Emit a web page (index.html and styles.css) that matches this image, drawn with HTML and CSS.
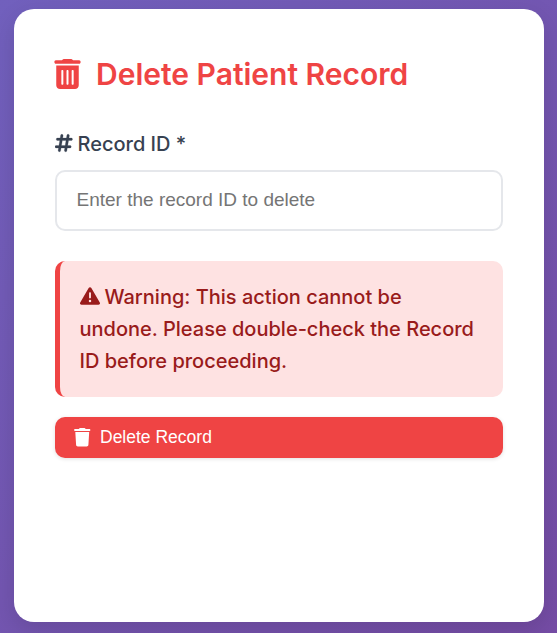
FILE: index.html
```html
<!DOCTYPE html>
<html lang="en"><head><meta charset="utf-8"><title>Delete Patient Record</title><link rel="stylesheet" href="styles.css"></head>
<body>
<main class="card">
<h1 class="title"><svg class="icon-title" viewBox="0 0 448 512"><path fill-rule="evenodd" d="M135.2 17.7C140.6 6.8 151.700 0 163.800 0H284.200c12.100 0 23.200 6.800 28.600 17.700L320 20h104c13 0 24 13 24 31s-11 31-24 31H24C11 82 0 69 0 51S11 20 24 20h104zM32 112H416V448c0 35.300-28.700 64-64 64H96c-35.300 0-64-28.700-64-64V112zm104 76c-10 0-17 7-17 17V422c0 10 7 17 17 17s17-7 17-17V205c0-10-7-17-17-17zm88 0c-10 0-17 7-17 17V422c0 10 7 17 17 17s17-7 17-17V205c0-10-7-17-17-17zm88 0c-10 0-17 7-17 17V422c0 10 7 17 17 17s17-7 17-17V205c0-10-7-17-17-17z"/></svg>Delete Patient Record</h1>
<form>
<label class="label" for="record"><svg class="icon-hash" viewBox="0 0 448 512"><path d="M181.300 32.400c17.400 2.900 29.200 19.400 26.300 36.800L197.800 128h95.100l11.500-69.300c2.900-17.400 19.400-29.200 36.800-26.300s29.200 19.400 26.300 36.800L357.800 128H416c17.700 0 32 14.300 32 32s-14.300 32-32 32H347.100L325.800 320H384c17.700 0 32 14.300 32 32s-14.300 32-32 32H315.100l-11.500 69.300c-2.900 17.400-19.400 29.200-36.800 26.300s-29.200-19.400-26.300-36.800l9.800-58.700H155.100l-11.500 69.300c-2.900 17.400-19.400 29.200-36.800 26.300s-29.200-19.400-26.300-36.800L90.200 384H32c-17.700 0-32-14.300-32-32s14.300-32 32-32h68.900l21.300-128H64c-17.700 0-32-14.300-32-32s14.300-32 32-32h68.900l11.500-69.300c2.900-17.400 19.400-29.200 36.800-26.300zM187.100 192L165.800 320h95.100l21.300-128H187.100z"/></svg>Record ID *</label>
<input class="input" id="record" placeholder="Enter the record ID to delete">
<p class="warning"><svg class="icon-warn" viewBox="0 0 512 512"><path d="M256 32c14.200 0 27.300 7.500 34.500 19.800l216 368c7.300 12.400 7.300 27.700 .2 40.100S486.300 480 472 480H40c-14.300 0-27.600-7.700-34.700-20.100s-7-27.800 .2-40.100l216-368C228.700 39.500 241.800 32 256 32zm0 128c-13.300 0-24 10.700-24 24V296c0 13.300 10.700 24 24 24s24-10.700 24-24V184c0-13.300-10.700-24-24-24zm32 224a32 32 0 1 0 -64 0 32 32 0 1 0 64 0z"/></svg>Warning: This action cannot be undone. Please double-check the Record ID before proceeding.</p>
<button class="button" type="button"><svg class="icon-button" viewBox="0 0 448 512"><path d="M135.200 17.700L128 28H24C10 28 0 40 0 56S10 84 24 84H424c14 0 24-12 24-28s-10-28-24-28H320l-7.200-10.300C307.400 6.800 296.300 0 284.200 0H163.800c-12.100 0-23.200 6.800-28.600 17.700zM416 108H32L53.200 467c1.600 25.300 22.600 45 47.900 45H346.900c25.300 0 46.300-19.700 47.900-45L416 108z"/></svg>Delete Record</button>
</form>
</main>
</body></html>
```
FILE: styles.css
```css
* { box-sizing: border-box; }
body { margin: 0; height: 633px; padding: 9px 13px 11px 14px; overflow: hidden; background: linear-gradient(135deg, #7160bd, #754ca5); font-family: Inter, sans-serif; }
svg { fill: currentColor; flex: none; }
.card { height: 613px; padding: 40px 41px; border-radius: 20px; background: #fff; box-shadow: 0 8px 24px rgba(0,0,0,.12); }
.title { display: flex; align-items: center; gap: 15px; height: 50px; margin: 0 0 29px; color: #ef4444; font-size: 30px; font-weight: 600; line-height: 50px; white-space: nowrap; }
.icon-title { width: 27px; height: 30px; margin-left: -1px; }
.label { display: block; height: 32px; margin-bottom: 10px; color: #374151; font-size: 20px; font-weight: 500; line-height: 32px; }
.icon-hash { width: 17.5px; height: 20px; margin-right: 5px; vertical-align: -2px; stroke: currentColor; stroke-width: 6px; }
.input { display: block; width: 100%; height: 61px; border: 2px solid #e5e7eb; border-radius: 10px; padding: 0 20px 2px 19.500px; font: 19px "Liberation Sans", sans-serif; outline: 0; }
.input::placeholder { color: #757575; }
.warning { height: 136px; margin: 30px 0 20px; padding: 20px 20px 20px 19.500px; border-left: 5px solid #ef4444; border-radius: 10px; background: #fee2e2; color: #991b1b; font-size: 20px; font-weight: 500; line-height: 32px; }
.icon-warn { width: 20px; height: 20px; margin-right: 5px; vertical-align: -2px; }
.button { display: flex; align-items: center; gap: 9.500px; width: 100%; height: 41px; padding: 0 19px; border: 0; border-radius: 10px; background: #ef4444; color: #fff; font: 17.500px "Liberation Sans", sans-serif; box-shadow: 0 1px 4px rgba(0,0,0,.12); }
.icon-button { width: 16.500px; height: 18.500px; }
```
